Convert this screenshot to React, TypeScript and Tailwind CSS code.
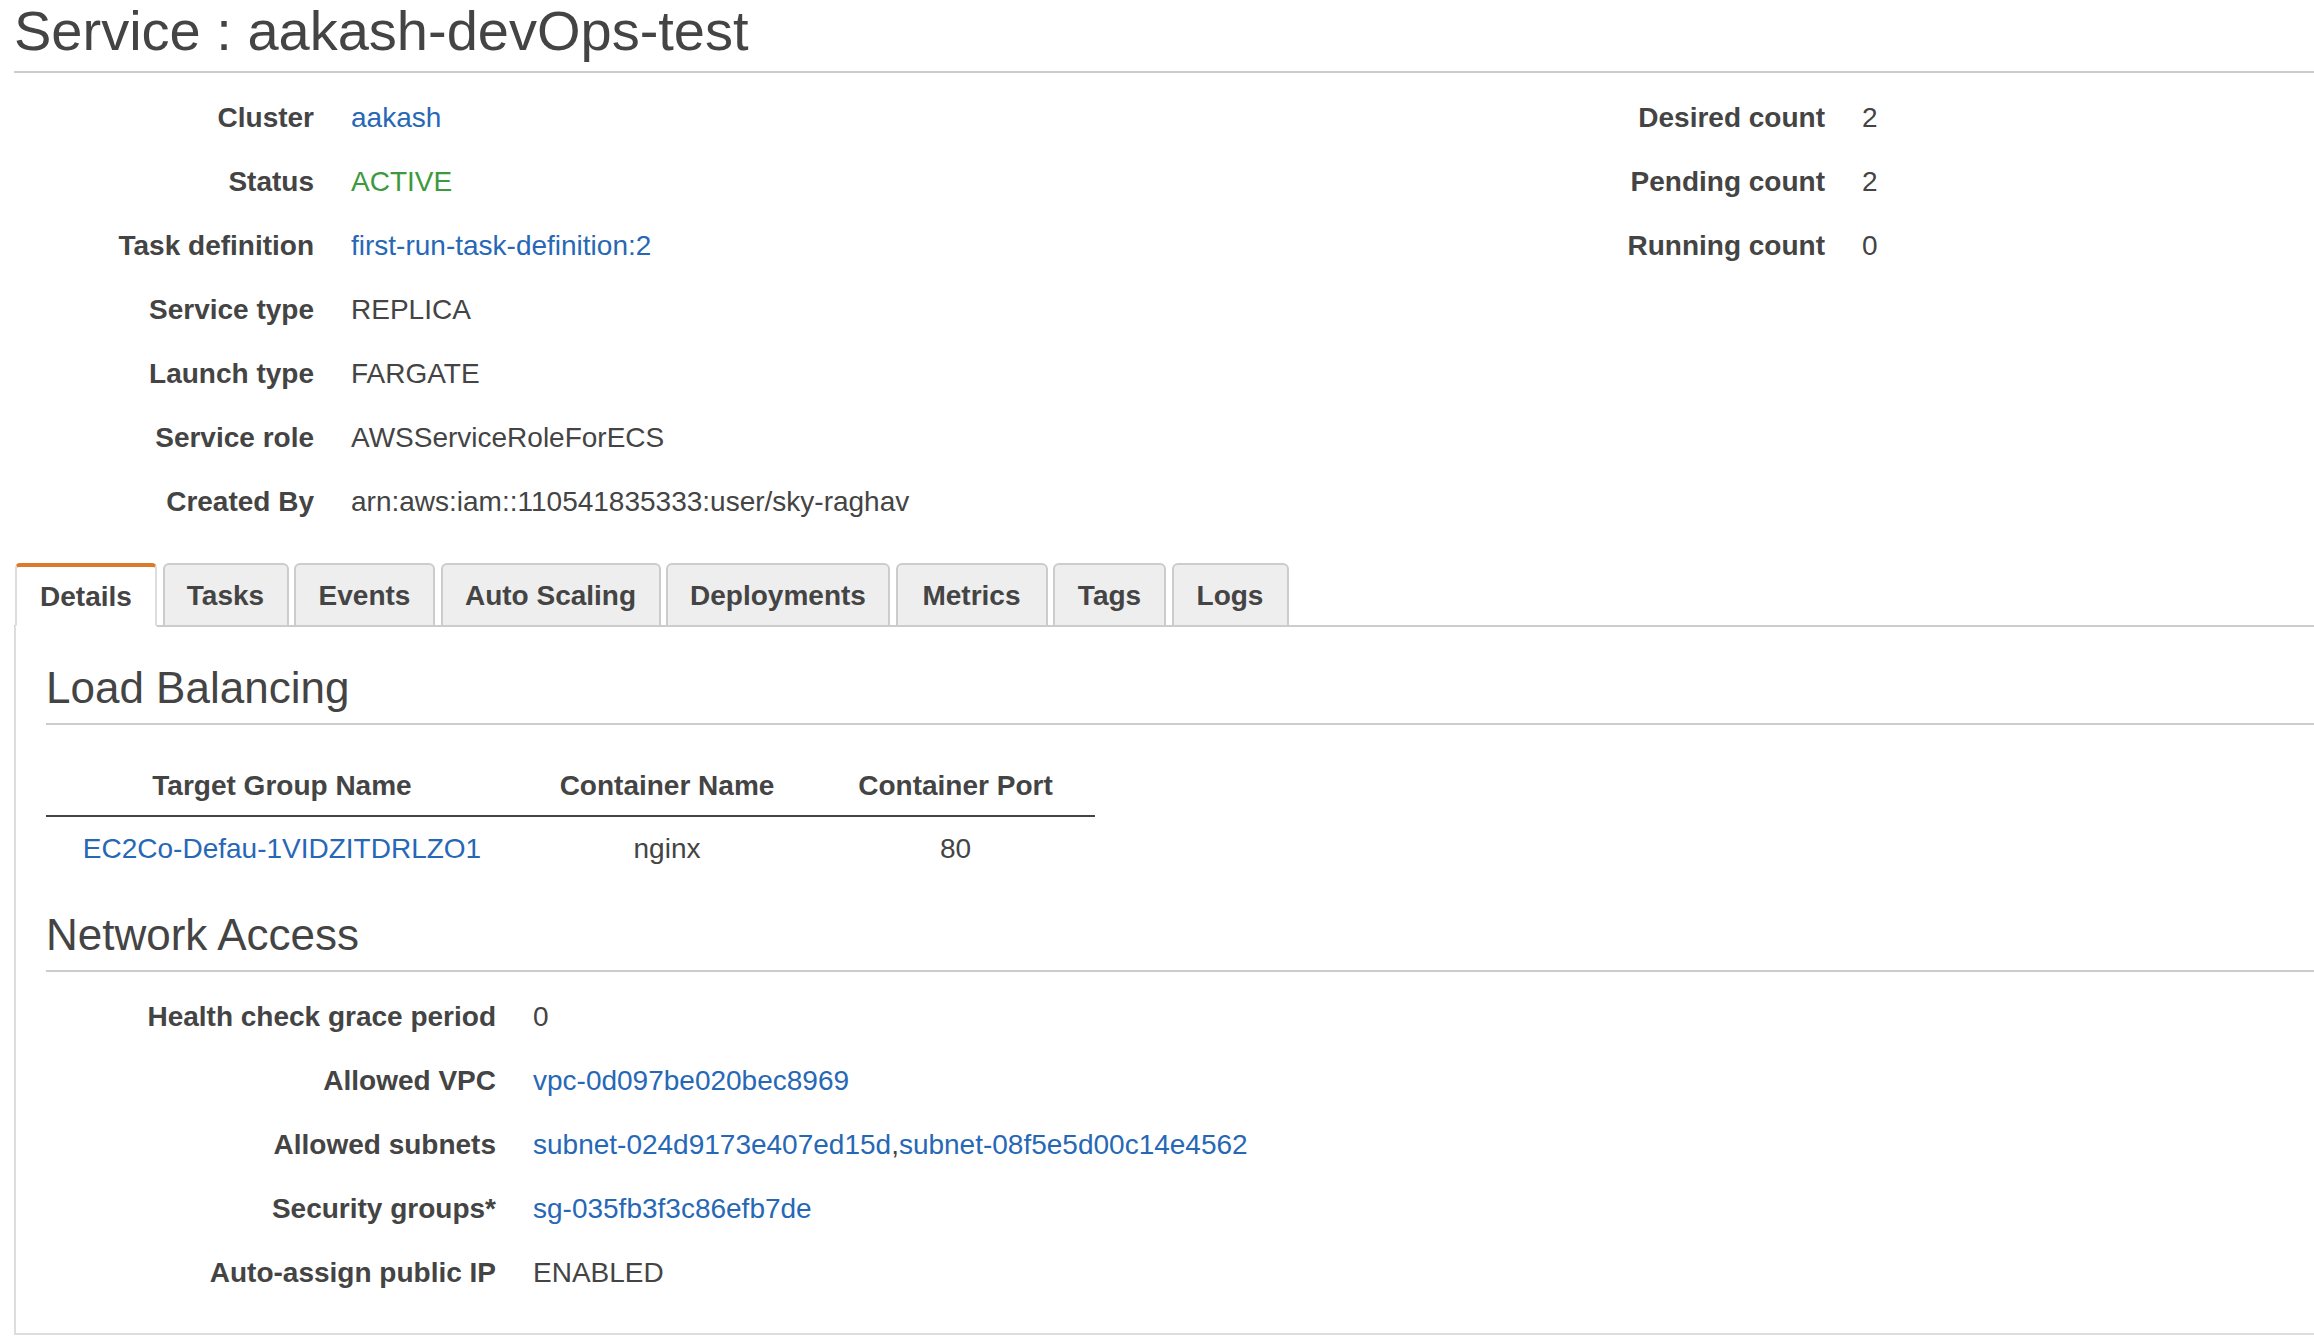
import React from 'react'

const LINK = 'text-[#2768b6]'

type Row = { label: string; value: React.ReactNode }

const summaryLeft: Row[] = [
  { label: 'Cluster', value: <span className={LINK}>aakash</span> },
  { label: 'Status', value: <span className="text-[#3c9a3c]">ACTIVE</span> },
  { label: 'Task definition', value: <span className={LINK}>first-run-task-definition:2</span> },
  { label: 'Service type', value: 'REPLICA' },
  { label: 'Launch type', value: 'FARGATE' },
  { label: 'Service role', value: 'AWSServiceRoleForECS' },
  { label: 'Created By', value: 'arn:aws:iam::110541835333:user/sky-raghav' },
]

const summaryRight: Row[] = [
  { label: 'Desired count', value: '2' },
  { label: 'Pending count', value: '2' },
  { label: 'Running count', value: '0' },
]

const network: Row[] = [
  { label: 'Health check grace period', value: '0' },
  { label: 'Allowed VPC', value: <span className={LINK}>vpc-0d097be020bec8969</span> },
  {
    label: 'Allowed subnets',
    value: (
      <>
        <span className={LINK}>subnet-024d9173e407ed15d</span>,<span className={LINK}>subnet-08f5e5d00c14e4562</span>
      </>
    ),
  },
  { label: 'Security groups*', value: <span className={LINK}>sg-035fb3f3c86efb7de</span> },
  { label: 'Auto-assign public IP', value: 'ENABLED' },
]

const tabs = [
  { name: 'Details', w: 'w-[142px]' },
  { name: 'Tasks', w: 'w-[126px]' },
  { name: 'Events', w: 'w-[141px]' },
  { name: 'Auto Scaling', w: 'w-[220px]' },
  { name: 'Deployments', w: 'w-[224px]' },
  { name: 'Metrics', w: 'w-[152px]' },
  { name: 'Tags', w: 'w-[113px]' },
  { name: 'Logs', w: 'w-[117px]' },
]

function KeyValues({ rows, labelWidth }: { rows: Row[]; labelWidth: string }) {
  return (
    <div className="flex flex-col">
      {rows.map((r) => (
        <div key={r.label} className="flex h-[64px] items-center leading-[64px]">
          <div className={`${labelWidth} shrink-0 text-right font-bold`}>{r.label}</div>
          <div className="ml-[37px] whitespace-nowrap">{r.value}</div>
        </div>
      ))}
    </div>
  )
}

function SectionTitle({ children, top }: { children: React.ReactNode; top: string }) {
  return (
    <h2 className={`${top} border-b-2 border-[#ccc] pb-[10px] text-[44px] leading-[50px] text-[#444]`}>
      {children}
    </h2>
  )
}

export default function App() {
  return (
    <div className="min-h-screen w-full overflow-hidden bg-white pl-[14px] font-['Liberation_Sans',Arial,sans-serif] text-[28px] text-[#444]">
      <h1 className="border-b-2 border-[#ccc] pb-[9px] text-[56px] leading-[62px] text-[#444]">
        Service : aakash-devOps-test
      </h1>

      <div className="flex pt-[13px]">
        <div className="w-[1525px] shrink-0">
          <KeyValues rows={summaryLeft} labelWidth="w-[300px]" />
        </div>
        <div>
          <KeyValues rows={summaryRight} labelWidth="w-[286px]" />
        </div>
      </div>

      {/* tabs */}
      <div className="mt-[29px] flex h-[64px] gap-[5.5px] border-b-2 border-[#ccc] pl-px">
        {tabs.map((t, i) =>
          i === 0 ? (
            <div
              key={t.name}
              className={`${t.w} -mb-[2px] flex h-[64px] items-center justify-center rounded-t-[5px] border-x-2 border-t-4 border-b-2 border-x-[#ddd] border-t-[#dc7a2c] border-b-white bg-white pt-[2px] font-bold`}
            >
              {t.name}
            </div>
          ) : (
            <div
              key={t.name}
              className={`${t.w} -mb-[2px] flex h-[64px] items-center justify-center rounded-t-[6px] border-2 border-[#ccc] bg-[#eee] pt-[2px] font-bold`}
            >
              {t.name}
            </div>
          )
        )}
      </div>

      {/* panel */}
      <div className="border-b-2 border-l-2 border-[#ddd] pb-[28px] pl-[30px]">
        <SectionTitle top="pt-[36px]">Load Balancing</SectionTitle>

        <table className="mt-[31px] w-[1049px] table-fixed border-collapse">
          <colgroup>
            <col className="w-[472px]" />
            <col className="w-[298px]" />
            <col className="w-[279px]" />
          </colgroup>
          <thead>
            <tr className="h-[60px] border-b-2 border-[#444]">
              <th className="p-0 text-center font-bold leading-[40px]">Target Group Name</th>
              <th className="p-0 text-center font-bold leading-[40px]">Container Name</th>
              <th className="p-0 text-center font-bold leading-[40px]">Container Port</th>
            </tr>
          </thead>
          <tbody>
            <tr className="h-[64px]">
              <td className={`p-0 text-center ${LINK}`}>EC2Co-Defau-1VIDZITDRLZO1</td>
              <td className="p-0 text-center">nginx</td>
              <td className="p-0 text-center">80</td>
            </tr>
          </tbody>
        </table>

        <SectionTitle top="mt-[30px]">Network Access</SectionTitle>

        <div className="pt-[13px]">
          <KeyValues rows={network} labelWidth="w-[450px]" />
        </div>
      </div>
    </div>
  )
}
